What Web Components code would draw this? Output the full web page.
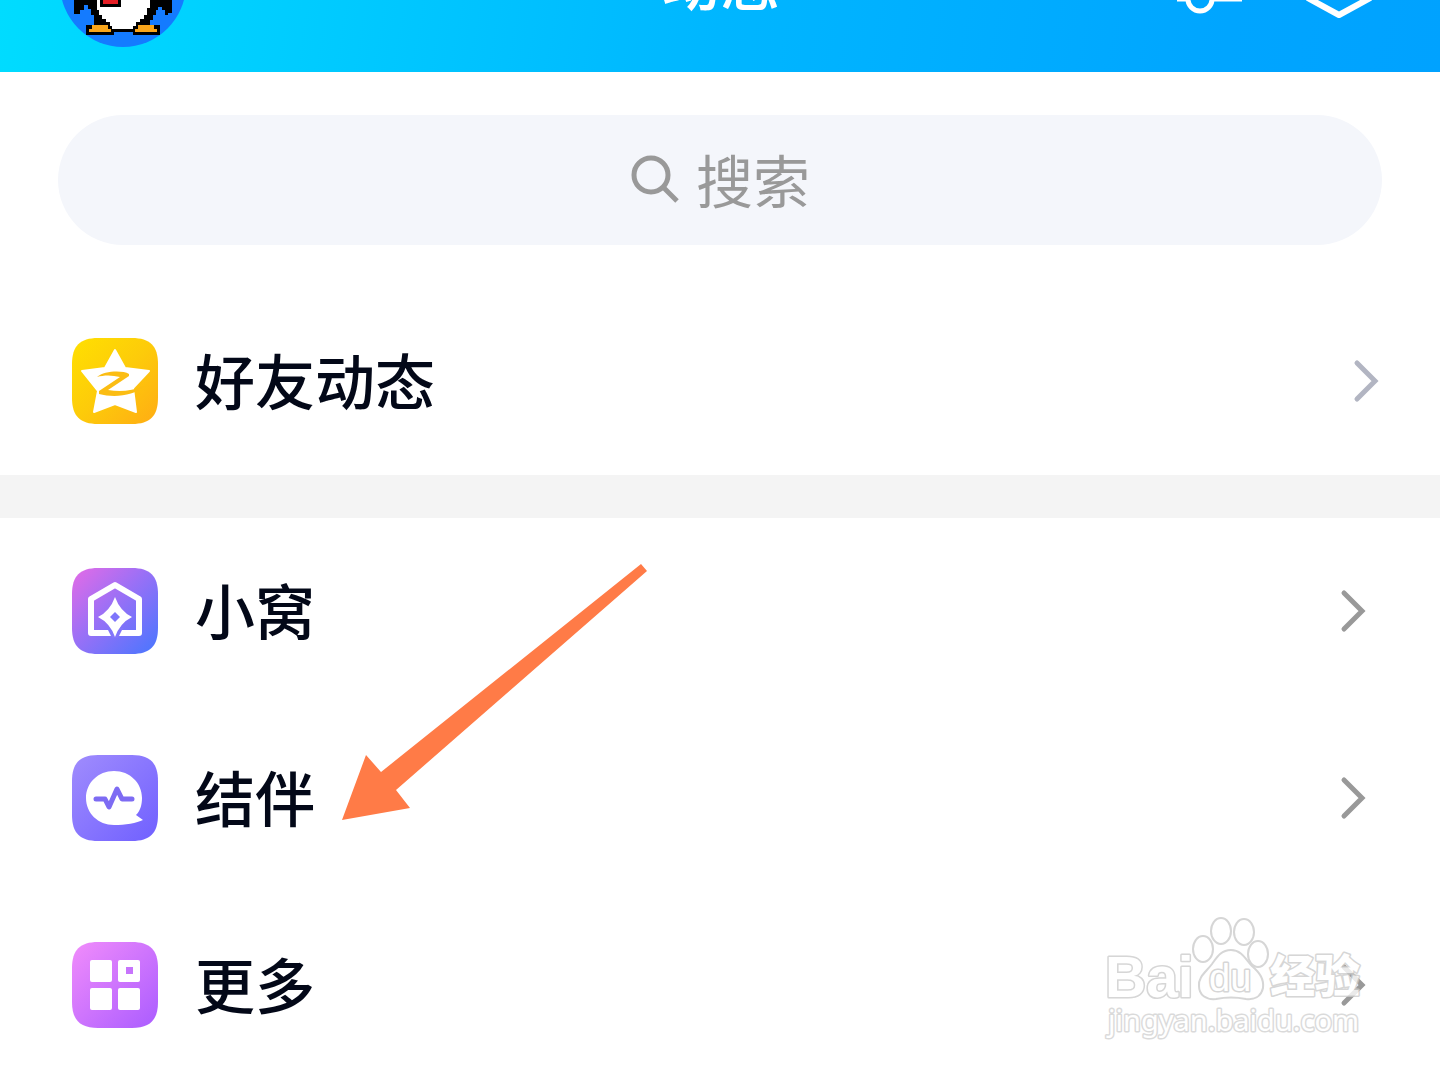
<!DOCTYPE html>
<html lang="zh-CN">
<head>
<meta charset="utf-8">
<meta name="viewport" content="width=device-width, initial-scale=1">
<title>动态</title>
<style>
  html, body { height: 100%; }
  body {
    margin: 0;
    overflow: hidden;
    position: relative;
    background: #fff;
    color: #030818;
    font-family: "Noto Sans CJK SC", sans-serif;
  }
</style>
</head>
<body>
<feed-header>动态</feed-header>
<main>
  <search-box></search-box>
  <feed-group>
    <feed-row tone="accent">
      <svg slot="icon" viewBox="0 0 86 86" aria-hidden="true">
        <defs><linearGradient id="gz" x1="0" y1="0" x2="1" y2="1"><stop offset="0" stop-color="#ffe000"/><stop offset=".5" stop-color="#fdcb0a"/><stop offset="1" stop-color="#ffac14"/></linearGradient></defs>
        <path fill="url(#gz)" d="M26 0H60C78 0 86 8 86 26V60C86 78 78 86 60 86H26C8 86 0 78 0 60V26C0 8 8 0 26 0Z"/>
        <path fill="#fff" stroke="#fff" stroke-width="2" stroke-linejoin="round" d="M43 12L53 30L77 33L61 50L64 74L43 66L22 74L26 53L10 33L33 30Z"/>
        <path fill="#fbbd13" d="M25 39C32 33 50 32 57 36V38L36 52C48 54 60 53 72 48C62 58 42 60 27 56V53L48 39C40 37 32 37 25 39Z"/>
      </svg>
      好友动态
    </feed-row>
  </feed-group>
  <feed-group divided>
    <feed-row>
      <svg slot="icon" viewBox="0 0 86 86" aria-hidden="true">
        <defs><linearGradient id="gh" x1="0" y1="0" x2="1" y2="1"><stop offset="0" stop-color="#e56be6"/><stop offset=".45" stop-color="#9a70f6"/><stop offset="1" stop-color="#4776ff"/></linearGradient></defs>
        <path fill="url(#gh)" d="M26 0H60C78 0 86 8 86 26V60C86 78 78 86 60 86H26C8 86 0 78 0 60V26C0 8 8 0 26 0Z"/>
        <path fill="none" stroke="#fff" stroke-width="6" stroke-linejoin="round" d="M43 17L67 31V65H19V31Z"/>
        <path fill="#8275fa" d="M35 60H51L46 70H40Z"/>
        <path fill="#fff" d="M43 29Q48 43 60 49Q48 55 43 69Q38 55 26 49Q38 43 43 29Z"/>
        <path fill="#7e75fb" d="M43 44L48 49L43 54L38 49Z"/>
      </svg>
      小窝
    </feed-row>
    <feed-row>
      <svg slot="icon" viewBox="0 0 86 86" aria-hidden="true">
        <defs><linearGradient id="gc" x1="0" y1="0" x2="1" y2="1"><stop offset="0" stop-color="#a08cfd"/><stop offset="1" stop-color="#7060ff"/></linearGradient></defs>
        <path fill="url(#gc)" d="M26 0H60C78 0 86 8 86 26V60C86 78 78 86 60 86H26C8 86 0 78 0 60V26C0 8 8 0 26 0Z"/>
        <path fill="#fff" d="M42 16C58 16 70 28 70 43C70 50 68 56 64 60L71 65C65 68 53 70 42 70C26 70 14 58 14 43C14 28 26 16 42 16Z"/>
        <path fill="none" stroke="#7d6bf3" stroke-width="5" stroke-linecap="round" stroke-linejoin="round" d="M24 44H33L37 52L45 34L50 44H60"/>
      </svg>
      结伴
    </feed-row>
    <feed-row>
      <svg slot="icon" viewBox="0 0 86 86" aria-hidden="true">
        <defs><linearGradient id="gm" x1="0" y1="0" x2="1" y2="1"><stop offset="0" stop-color="#f18cfb"/><stop offset="1" stop-color="#aa5cff"/></linearGradient></defs>
        <path fill="url(#gm)" d="M26 0H60C78 0 86 8 86 26V60C86 78 78 86 60 86H26C8 86 0 78 0 60V26C0 8 8 0 26 0Z"/>
        <g fill="#fff"><rect x="18" y="18" width="22" height="22" rx="2"/><rect x="46" y="18" width="22" height="22" rx="2"/><rect x="18" y="46" width="22" height="22" rx="2"/><rect x="46" y="46" width="22" height="22" rx="2"/></g>
        <rect x="54" y="25" width="7" height="7" fill="#c774fc"/>
      </svg>
      更多
    </feed-row>
  </feed-group>
</main>
<pointer-arrow></pointer-arrow>
<site-watermark></site-watermark>

<script>
class BaseElement extends HTMLElement {
  constructor() {
    super();
    this.attachShadow({ mode: "open" }).innerHTML = this.constructor.markup;
  }
}

customElements.define("feed-header", class extends BaseElement {
  static markup = `
    <style>
      :host { display: flex; align-items: flex-end; height: 72px; overflow: hidden;
        background: linear-gradient(100deg, #00dcff 0%, #00b6ff 50%, #00a5ff 85%, #00a2ff 100%); color: #fff; }
      header { flex: 1; display: grid; grid-template-columns: 1fr auto 1fr; align-items: center;
        height: 126px; padding: 0 60px 25px; flex-shrink: 0; }
      h1 { margin: 0; padding-bottom: 8px; font-size: 60px; line-height: 60px; font-weight: 500; }
      .tools { display: flex; justify-content: flex-end; gap: 60px; }
      button { display: block; padding: 0; border: 0; background: none; color: inherit; }
      svg { display: block; overflow: visible; }
    </style>
    <header>
      <svg class="avatar" width="126" height="126" viewBox="0 0 126 126" role="img" aria-label="头像">
        <circle cx="63" cy="63" r="63" fill="#147bff"/>
        <path d="M35 30H90V76H112V92H108V94H105V89H102V86H98V89H96V94H93V99H90V104H100V114H73V111H54V114H26V104H34V94H31V88H28V84H24V89H20V93H14V76H35Z" fill="#000"/>
        <path d="M37 40H90V87H87V94H84V98H80V101H76V105H73V108H52V105H50V101H46V98H42V94H39V89H37Z" fill="#fff"/>
        <path d="M40 60H61V86H40Z" fill="#000"/>
        <path d="M43 60H58V83H43Z" fill="#e51e25"/>
        <path d="M32 104H48V108H51V111H29V108H32ZM78 104H94V108H97V111H75V108H78Z" fill="#f9a51a"/>
      </svg>
      <h1><slot></slot></h1>
      <div class="tools">
        <button aria-label="筛选"><svg width="72" height="72" viewBox="0 0 72 72" fill="none" stroke="#fff" stroke-width="5"><path d="M1 21H29M53 21H66M1 51H12M36 51H66"/><circle cx="41" cy="21" r="11"/><circle cx="24" cy="51" r="12"/></svg></button>
        <button aria-label="设置"><svg width="72" height="72" viewBox="0 0 72 72" fill="none" stroke="#fff" stroke-width="6" stroke-linejoin="round"><path d="M31 5L62 22V50L31 67L0 50V22Z"/><circle cx="31" cy="36" r="11"/></svg></button>
      </div>
    </header>`;
});

customElements.define("search-box", class extends BaseElement {
  static markup = `
    <style>
      :host { display: block; padding: 43px 58px; }
      label { display: flex; align-items: center; justify-content: center; gap: 16px; height: 130px;
        border-radius: 65px; background: #f4f6fb; }
      svg { display: block; flex: none; }
      input { width: 114px; height: 80px; padding: 0 0 4px; box-sizing: border-box; border: 0; outline: 0; background: none;
        font: 57px/76px "Noto Sans CJK SC", sans-serif; color: #030818; }
      input::placeholder { color: #999; opacity: 1; }
    </style>
    <label>
      <svg width="50" height="50" viewBox="0 0 50 50" fill="none" stroke="#999" stroke-width="5" aria-hidden="true"><circle cx="21" cy="20" r="17"/><path d="M33 32L47 46"/></svg>
      <input type="text" placeholder="搜索" aria-label="搜索">
    </label>`;
});

customElements.define("feed-group", class extends BaseElement {
  static markup = `
    <style>
      :host { display: flex; flex-direction: column; }
      :host([divided]) { border-top: 43px solid #f4f4f4; }
    </style>
    <slot></slot>`;
});

customElements.define("feed-row", class extends BaseElement {
  static markup = `
    <style>
      :host { display: block; --chevron: #999; --edge: 74px; }
      :host([tone="accent"]) { --chevron: #b2b5c2; --edge: 61px; }
      a { display: flex; align-items: center; gap: 37px; height: 187px; box-sizing: border-box;
        padding: 0 var(--edge) 2px 72px; color: inherit; text-decoration: none; }
      ::slotted(svg) { display: block; flex: none; width: 86px; height: 86px; }
      span { flex: 1; padding-bottom: 4px; font-size: 60px; line-height: 80px; font-weight: 500; }
      .chevron { flex: none; stroke: var(--chevron); }
    </style>
    <a href="#">
      <slot name="icon"></slot>
      <span><slot></slot></span>
      <svg class="chevron" width="26" height="44" viewBox="0 0 26 44" fill="none" stroke-width="5" stroke-linecap="round" aria-hidden="true"><path d="M4 4L22 22L4 40"/></svg>
    </a>`;
});

customElements.define("pointer-arrow", class extends BaseElement {
  static markup = `
    <style>
      :host { position: absolute; left: 342px; top: 564px; pointer-events: none; }
      svg { display: block; }
    </style>
    <svg width="306" height="257" viewBox="0 0 306 257" aria-hidden="true"><path fill="#ff7b47" d="M299 0L305 7L54 226L68 244L0 256L24 191L39 208Z"/></svg>`;
});

customElements.define("site-watermark", class extends BaseElement {
  static markup = `
    <style>
      :host { position: absolute; right: 70px; top: 910px; pointer-events: none; opacity: .8; }
      svg { display: block; }
      text { fill: #fff; stroke: #ccc; stroke-width: 3px; paint-order: stroke; stroke-linejoin: round; }
      .name { font: 700 57px "Liberation Sans", sans-serif; }
      .du { font: 400 38px "Liberation Sans", sans-serif; }
      .cn { font: 900 45px "Noto Sans CJK SC", sans-serif; }
      .url { font: 400 29px "Noto Sans", sans-serif; stroke: #d2d2d2; }
    </style>
    <svg width="270" height="136" viewBox="0 0 270 136">
      <text class="name" x="5" y="87">Bai</text>
      <g fill="#fff" stroke="#ccc" stroke-width="2">
        <ellipse cx="103" cy="39" rx="10" ry="13"/><ellipse cx="121" cy="21" rx="10" ry="13"/><ellipse cx="144" cy="22" rx="10" ry="13"/><ellipse cx="158" cy="44" rx="10" ry="13"/>
        <path d="M131 40C142 40 146 50 152 56C160 63 164 69 163 78C161 87 154 90 146 89C136 87 126 87 116 89C106 90 99 85 99 76C98 67 106 62 112 54C117 47 121 40 131 40Z"/>
      </g>
      <text class="du" x="109" y="81">du</text>
      <text class="cn" x="170" y="83">经验</text>
      <text class="url" x="8" y="121">jingyan.baidu.com</text>
    </svg>`;
});
</script>
</body>
</html>
